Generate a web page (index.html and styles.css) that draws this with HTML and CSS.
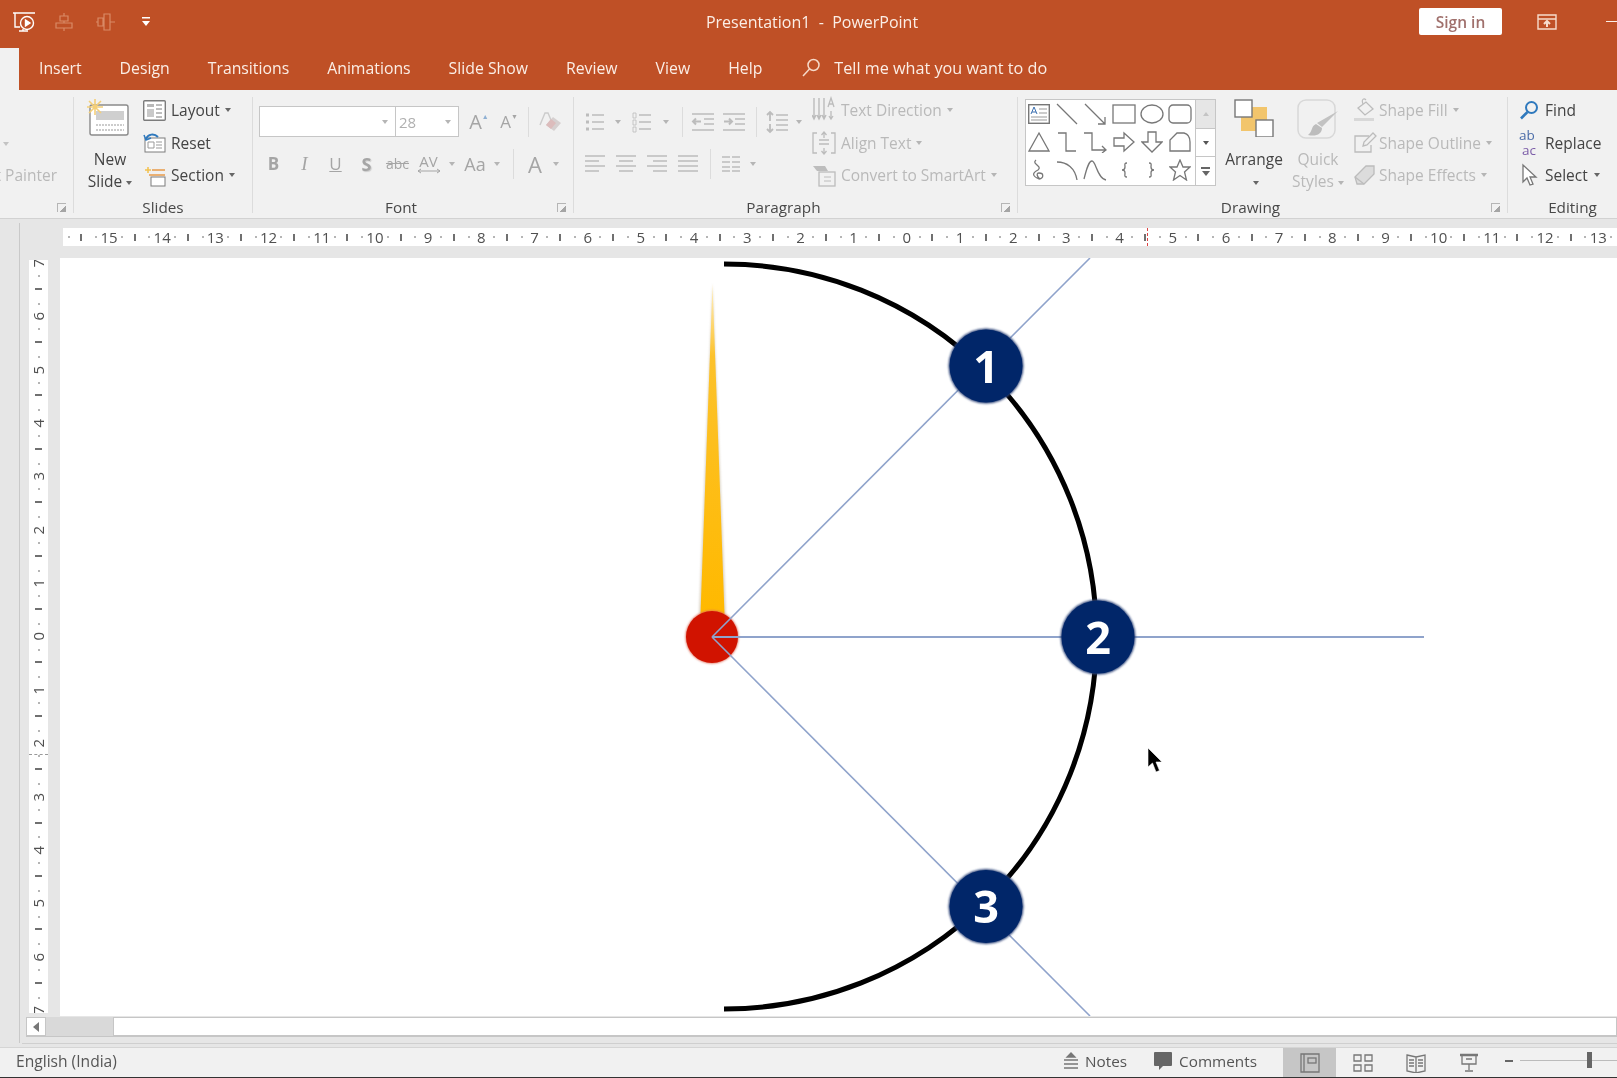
FILE: index.html
```html
<!DOCTYPE html>
<html>

<head>
    <meta charset="utf-8" />
    <title>Presentation1 - PowerPoint</title>
    <link rel="stylesheet" href="styles.css">
</head>

<body>
    <div class="app">
        <!-- title bar -->
        <header class="titlebar">
            <div class="qat">
                <svg class="qat-logo" width="24" height="24" viewBox="0 0 24 24" fill="none" stroke="#fff" stroke-width="1.4"><path d="M1 3h22M3 3v14h5"/><circle cx="15" cy="13" r="6.5"/><path d="M13.5 10v6l4.500-3z" fill="#fff"/><path d="M7 21h9M11 19v2"/></svg>
                <svg class="qat-dim" width="18" height="22" viewBox="0 0 18 22" fill="none" stroke="#d98a66" stroke-width="1.2"><path d="M9 2v3M9 10v2M9 17v3M5 5h8v5H5zM1 12h16v5H1z"/></svg>
                <svg class="qat-dim" width="20" height="22" viewBox="0 0 20 22" fill="none" stroke="#d98a66" stroke-width="1.2"><path d="M0 11h2M8 11h0M14 11h5M2 7h5v8H2zM8 3h6v16H8z"/></svg>
                <svg class="qat-more" width="10" height="12" viewBox="0 0 10 12" fill="#fff"><path d="M1 1h8v1.500H1zM1 5h8L5 10z"/></svg>
            </div>
            <div class="doc-title">Presentation1&nbsp; -&nbsp; PowerPoint</div>
            <div class="win-tools">
                <button class="signin">Sign in</button>
                <svg width="20" height="16" viewBox="0 0 20 16" fill="none" stroke="#f7dccc" stroke-width="1.4"><path d="M1 1h18v14H1zM1 5h18"/><path d="M10 13V7M7 10l3-3 3 3" stroke-width="2"/></svg>
                <span class="win-min"></span>
            </div>
        </header>

        <!-- tabs -->
        <nav class="tabs">
            <span class="tab-active"></span>
            <span class="tab">Insert</span>
            <span class="tab">Design</span>
            <span class="tab">Transitions</span>
            <span class="tab">Animations</span>
            <span class="tab">Slide Show</span>
            <span class="tab">Review</span>
            <span class="tab">View</span>
            <span class="tab">Help</span>
            <span class="tell">
                <svg width="20" height="22" viewBox="0 0 20 22" fill="none" stroke="#f6d9c8" stroke-width="1.5"><circle cx="12.500" cy="8" r="5.500"/><path d="M8.500 12 2 19"/></svg>
                Tell me what you want to do
            </span>
        </nav>

        <!-- ribbon -->
        <section class="ribbon">
            <div class="group group-stub">
                <div class="stub-body">
                    <span class="caret caret-stub"></span>
                    <span class="stub-text">Format Painter</span>
                </div>
                <div class="group-foot"><span class="group-label"></span><span class="launcher"></span></div>
            </div>
            <span class="rsep"></span>

            <div class="group group-slides">
                <div class="group-body">
                    <div class="bigbtn bigbtn-new">
                        <svg width="42" height="38" viewBox="0 0 42 38"><rect x="3" y="6" width="38" height="30" rx="2" fill="#fff" stroke="#8a8a8a" stroke-width="1.4"/><rect x="9" y="12" width="28" height="9" fill="#cfcfcf"/><path d="M9 26h28M9 31h28" stroke="#999" stroke-dasharray="2 1"/><g stroke="#f4cf78" stroke-width="1.6"><path d="M8 0v16M0 8h16M2 2l12 12M14 2 2 14"/></g></svg>
                        <div class="big-text">New<br>Slide<span class="caret"></span></div>
                    </div>
                    <div class="rows">
                        <div class="item"><svg width="23" height="21" viewBox="0 0 23 21" fill="none" stroke="#7c7c7c"><rect x=".7" y=".7" width="21.600" height="19.600" rx="1" stroke-width="1.400" fill="#fff"/><rect x="4" y="4" width="7" height="3" fill="#b8b8b8" stroke="none"/><rect x="4" y="9" width="7" height="8" fill="#c9c9c9" stroke="none"/><path d="M13 5h6M13 9h6M13 13h6M13 17h6"/></svg>Layout<span class="caret"></span></div>
                        <div class="item"><svg width="23" height="21" viewBox="0 0 23 21" fill="none" stroke="#7c7c7c"><rect x="2" y="6" width="20" height="14" fill="#fff"/><path d="M5 10h6v6H5zM13 10h6M13 13h6M13 16h6" stroke="#999"/><path d="M3 7c2-5 8-6 12-2" stroke="#2f79bd" stroke-width="2"/><path d="M1 3l2 5 5-2" stroke="#2f79bd" stroke-width="1.500"/></svg>Reset</div>
                        <div class="item"><svg width="23" height="23" viewBox="0 0 23 23" fill="none"><path d="M2 6h6M5 3v6" stroke="#f2c14e" stroke-width="1.500"/><path d="M9 6h13M6 11h16" stroke="#e79a4a" stroke-width="1.500"/><rect x="8" y="13" width="14" height="9" stroke="#7c7c7c" fill="#fff"/></svg>Section<span class="caret"></span></div>
                    </div>
                </div>
                <div class="group-foot"><span class="group-label">Slides</span></div>
            </div>
            <span class="rsep"></span>

            <div class="group group-font">
                <div class="tworow">
                    <div class="trow font-row1">
                        <span class="combo combo-name"><span class="caret caret-dim"></span></span>
                        <span class="combo combo-size">28<span class="caret caret-dim"></span></span>
                        <span class="slot glyph growa">A<sup>&#9650;</sup></span>
                        <span class="slot glyph shrinka">A<sup>&#9660;</sup></span>
                        <span class="vsep vsep-font"></span>
                        <span class="slot slot-eraser"><svg width="24" height="24" viewBox="0 0 24 24"><path d="M1 15 6 3h3l3 7" fill="none" stroke="#ccc" stroke-width="1.400"/><path d="M7 15l7-8 8 6-7 8z" fill="#d6d0d0"/><path d="M7 15l5-6 5 4-5 6z" fill="#dcbcbc"/></svg></span>
                    </div>
                    <div class="trow font-row2">
                        <span class="slot glyph fg-b">B</span>
                        <span class="slot glyph fg-i">I</span>
                        <span class="slot glyph fg-u">U</span>
                        <span class="slot glyph fg-s">S</span>
                        <span class="slot glyph fg-abc">abc</span>
                        <span class="slot glyph fg-av">AV<svg width="24" height="6" viewBox="0 0 24 6" fill="none" stroke="#a5a5a5"><path d="M1 3h22M4 1 1 3l3 2M20 1l3 2-3 2"/></svg></span>
                        <span class="caret-slot caret-14"><span class="caret caret-dim"></span></span>
                        <span class="slot glyph fg-aa">Aa</span>
                        <span class="caret-slot caret-12"><span class="caret caret-dim"></span></span>
                        <span class="vsep vsep-font2"></span>
                        <span class="slot glyph fg-a">A</span>
                        <span class="caret-slot caret-12"><span class="caret caret-dim"></span></span>
                    </div>
                </div>
                <div class="group-foot"><span class="group-label">Font</span><span class="launcher"></span></div>
            </div>
            <span class="rsep"></span>

            <div class="group group-para">
                <div class="group-body">
                    <div class="tworow para-left">
                        <div class="trow para-row1">
                            <span class="slot"><svg class="ico" width="22" height="22" viewBox="0 0 22 22"><path d="M8 4h12M8 11h12M8 18h12" stroke-width="1.500"/><path d="M2 4h3M2 11h3M2 18h3" stroke-width="3" stroke-dasharray="3 0"/></svg></span>
                            <span class="caret-slot w16"><span class="caret caret-dim"></span></span>
                            <span class="slot ml1"><svg class="ico" width="22" height="22" viewBox="0 0 22 22"><path d="M8 4h12M8 11h12M8 18h12" stroke-width="1.500"/><path d="M2 2h3v5H2zM2 9h3v5H2zM2 16h3v5H2z" stroke-width=".8"/></svg></span>
                            <span class="caret-slot w18"><span class="caret caret-dim"></span></span>
                            <span class="vsep vsep-p1"></span>
                            <span class="slot ml5"><svg class="ico" width="24" height="20" viewBox="0 0 24 20"><path d="M1 2h22M13 7h10M13 12h10M1 18h22" stroke-width="1.400"/><path d="M10 9.500H2M5 6.500 2 9.500l3 3" stroke-width="2"/></svg></span>
                            <span class="slot ml1"><svg class="ico" width="24" height="20" viewBox="0 0 24 20"><path d="M1 2h22M13 7h10M13 12h10M1 18h22" stroke-width="1.400"/><path d="M2 9.500h8M7 6.500l3 3-3 3" stroke-width="2"/></svg></span>
                            <span class="vsep vsep-p1"></span>
                            <span class="slot ml5"><svg class="ico" width="24" height="24" viewBox="0 0 24 24"><path d="M11 5h12M11 10h12M11 15h12M11 20h12" stroke-width="1.400"/><path d="M5 2v9M2 5l3-3 3 3M5 14v8M2 19l3 3 3-3" stroke-width="1.800"/></svg></span>
                            <span class="caret-slot w14"><span class="caret caret-dim"></span></span>
                        </div>
                        <div class="trow para-row2">
                            <span class="slot"><svg class="ico" width="22" height="20" viewBox="0 0 22 20"><path d="M1 2h20M1 7h14M1 12h20M1 17h14" stroke-width="1.500"/></svg></span>
                            <span class="slot ml1"><svg class="ico" width="22" height="20" viewBox="0 0 22 20"><path d="M1 2h20M4 7h14M1 12h20M4 17h14" stroke-width="1.500"/></svg></span>
                            <span class="slot ml1"><svg class="ico" width="22" height="20" viewBox="0 0 22 20"><path d="M1 2h20M7 7h14M1 12h20M7 17h14" stroke-width="1.500"/></svg></span>
                            <span class="slot ml1"><svg class="ico" width="22" height="20" viewBox="0 0 22 20"><path d="M1 2h20M1 7h20M1 12h20M1 17h20" stroke-width="1.500"/></svg></span>
                            <span class="vsep vsep-p1"></span>
                            <span class="slot ml5"><svg class="ico" width="20" height="18" viewBox="0 0 20 18"><path d="M1 2h8M11 2h8M1 7h8M11 7h8M1 12h8M11 12h8M1 16h8M11 16h8" stroke-width="1.400"/></svg></span>
                            <span class="caret-slot w14"><span class="caret caret-dim"></span></span>
                        </div>
                    </div>
                    <div class="rows rows-dim para-right">
                        <div class="item"><svg class="ico" width="24" height="28" viewBox="0 0 24 28"><path d="M2 2v20M7 2v20M12 2v20M0 19l2 4 2-4M5 19l2 4 2-4M10 19l2 4 2-4" stroke-width="1.400"/><path d="M16 11l3-9 3 9M17 8h4M19 15v8M17 20l2 3 2-3" stroke-width="1.300"/></svg>Text Direction<span class="caret caret-dim"></span></div>
                        <div class="item"><svg class="ico" width="24" height="24" viewBox="0 0 24 24"><path d="M5 2H1v20h4M19 2h4v20h-4M7 9h10M7 13h10" stroke-width="1.300"/><path d="M12 1v6M9.500 4 12 1l2.500 3M12 17v6M9.500 20l2.500 3 2.500-3" stroke-width="1.300"/></svg>Align Text<span class="caret caret-dim"></span></div>
                        <div class="item"><svg class="ico" width="24" height="24" viewBox="0 0 24 24"><path d="M1 3h12l3 5H5z" fill="#bdbdbd" stroke="none"/><rect x="7" y="9" width="16" height="14" fill="#f1f1f1" stroke-width="1.300"/><path d="M12 14h7M12 18h7"/></svg>Convert to SmartArt<span class="caret caret-dim"></span></div>
                    </div>
                </div>
                <div class="group-foot"><span class="group-label">Paragraph</span><span class="launcher"></span></div>
            </div>
            <span class="rsep"></span>

            <div class="group group-draw">
                <div class="group-body">
                    <div class="gallery">
                        <div class="shapes">
                            <span class="shape"><svg width="22" height="20" viewBox="0 0 22 20" fill="none" stroke="#777"><rect x=".7" y=".7" width="20.600" height="18.600" fill="#fff" stroke-width="1.400"/><path d="M3 10l3-7 3 7M4 8h4" stroke="#3a6fb0"/><path d="M11 5h8M11 9h8M3 13h16M3 16h16" stroke="#999"/></svg></span>
                            <span class="shape"><svg class="sh" width="22" height="22" viewBox="0 0 22 22"><path d="M1 1l20 20"/></svg></span>
                            <span class="shape"><svg class="sh" width="22" height="22" viewBox="0 0 22 22"><path d="M1 1l20 20M21 14v7h-7"/></svg></span>
                            <span class="shape"><svg class="sh" width="24" height="20" viewBox="0 0 24 20"><rect x="1" y="1" width="22" height="18"/></svg></span>
                            <span class="shape"><svg class="sh" width="24" height="20" viewBox="0 0 24 20"><ellipse cx="12" cy="10" rx="11" ry="9"/></svg></span>
                            <span class="shape"><svg class="sh" width="24" height="20" viewBox="0 0 24 20"><rect x="1" y="1" width="22" height="18" rx="4"/></svg></span>
                            <span class="shape"><svg class="sh" width="22" height="22" viewBox="0 0 22 22"><path d="M11 2 21 20H1z"/></svg></span>
                            <span class="shape"><svg class="sh" width="22" height="22" viewBox="0 0 22 22"><path d="M2 2h8v18h10"/></svg></span>
                            <span class="shape"><svg class="sh" width="24" height="22" viewBox="0 0 24 22"><path d="M1 2h8v17h13M19 15l4 4-4 3"/></svg></span>
                            <span class="shape"><svg class="sh" width="22" height="22" viewBox="0 0 22 22"><path d="M1 7h10V2l10 9-10 9v-5H1z"/></svg></span>
                            <span class="shape"><svg class="sh" width="22" height="22" viewBox="0 0 22 22"><path d="M7 1h8v10h6L11 21 1 11h6z"/></svg></span>
                            <span class="shape"><svg class="sh" width="22" height="22" viewBox="0 0 22 22"><path d="M8 2h7c4 1 6 4 6 9v9H1V9z"/></svg></span>
                            <span class="shape"><svg class="sh" width="20" height="22" viewBox="0 0 20 22"><path d="M7 1C2 5 14 7 9 11 3 14 3 17 10 20c5-1 5-6 0-6-3 0-2 4 1 6"/></svg></span>
                            <span class="shape"><svg class="sh" width="22" height="22" viewBox="0 0 22 22"><path d="M1 3c10 0 18 6 20 18"/></svg></span>
                            <span class="shape"><svg class="sh" width="24" height="22" viewBox="0 0 24 22"><path d="M1 20C4 8 6 2 9 2c4 0 5 17 14 19"/></svg></span>
                            <span class="shape"><svg class="sh" width="14" height="22" viewBox="0 0 14 22"><path d="M10 4C7 4 8 6 8 8c0 2-1 3-3 3 2 0 3 1 3 3 0 2-1 4 2 4"/></svg></span>
                            <span class="shape"><svg class="sh" width="14" height="22" viewBox="0 0 14 22"><path d="M4 4c3 0 2 2 2 4 0 2 1 3 3 3-2 0-3 1-3 3 0 2 1 4-2 4"/></svg></span>
                            <span class="shape"><svg class="sh" width="22" height="22" viewBox="0 0 22 22"><path d="M11 1l3 7h7l-5.500 5 2 8-6.500-4.500L4.500 21l2-8L1 8h7z"/></svg></span>
                        </div>
                        <div class="gal-scroll">
                            <span class="gal-btn gal-up"><span class="tri-up"></span></span>
                            <span class="gal-btn"><span class="tri-down"></span></span>
                            <span class="gal-btn"><span class="tri-more"></span></span>
                        </div>
                    </div>
                    <div class="bigbtn bigbtn-arrange">
                        <svg width="40" height="38" viewBox="0 0 40 38"><rect x="7" y="8" width="26" height="24" fill="#f2c56c"/><rect x="1" y="1" width="17" height="17" fill="#fff" stroke="#777" stroke-width="1.400"/><rect x="22" y="21" width="17" height="17" fill="#fff" stroke="#777" stroke-width="1.400"/></svg>
                        <div class="big-text">Arrange<br><span class="caret"></span></div>
                    </div>
                    <div class="bigbtn bigbtn-quick">
                        <svg width="42" height="42" viewBox="0 0 42 42" fill="none"><rect x="1" y="1" width="37" height="38" rx="8" stroke="#d8d8d8" stroke-width="1.500"/><path d="M41 12 25 28l-5-4z" fill="#c2c2c2"/><path d="M19 25c-5 2-3 7-8 11 8 2 14-1 14-7z" fill="#bdbdbd"/></svg>
                        <div class="big-text big-dim">Quick<br>Styles<span class="caret caret-dim"></span></div>
                    </div>
                    <div class="rows rows-dim draw-right">
                        <div class="item"><svg class="ico" width="24" height="24" viewBox="0 0 24 24"><path d="M5 10l8-6 7 7-8 6z" stroke-width="1.300"/><path d="M10 6c-2-5 1-6 3-4" stroke-width="1.200"/><path d="M1 20h20v3H1z" fill="#d8d8d8" stroke="none"/></svg>Shape Fill<span class="caret caret-dim"></span></div>
                        <div class="item"><svg class="ico" width="24" height="24" viewBox="0 0 24 24"><path d="M16 5H2v16h16v-7" stroke-width="1.300"/><path d="M20 2l3 3-9 9-4 1 1-4z" stroke-width="1.300"/></svg>Shape Outline<span class="caret caret-dim"></span></div>
                        <div class="item"><svg class="ico" width="24" height="24" viewBox="0 0 24 24"><path d="M2 14 13 3h8v8L11 21H4z" fill="#dcdcdc" stroke-width="1.300"/><path d="M2 14l9 7" stroke-width="1.300"/></svg>Shape Effects<span class="caret caret-dim"></span></div>
                    </div>
                </div>
                <div class="group-foot"><span class="group-label">Drawing</span><span class="launcher"></span></div>
            </div>
            <span class="rsep"></span>

            <div class="group group-edit">
                <div class="rows edit-rows">
                    <div class="item"><svg width="20" height="20" viewBox="0 0 20 20" fill="none" stroke="#2f79bd" stroke-width="2"><circle cx="12.500" cy="7.500" r="5.500"/><path d="M8.500 12 2 18.500" stroke-width="2.600"/></svg>Find</div>
                    <div class="item"><span class="replace-ico"><span>ab</span><span class="ac">ac</span></span>Replace</div>
                    <div class="item"><svg width="20" height="24" viewBox="0 0 20 24" fill="#fff" stroke="#777" stroke-width="1.300"><path d="M4 2v17l4-4 3 7 3-1-3-7h6z"/></svg>Select<span class="caret"></span></div>
                </div>
                <div class="group-foot"><span class="group-label">Editing</span></div>
            </div>
        </section>

        <!-- editor area -->
        <main class="workspace">
            <div class="gutter"></div>
            <div class="editor">
                <div class="hruler">
                    <span class="unit unit-lead"></span>
                    <span class="unit">15</span><span class="unit">14</span><span class="unit">13</span><span class="unit">12</span><span class="unit">11</span>
                    <span class="unit">10</span><span class="unit">9</span><span class="unit">8</span><span class="unit">7</span><span class="unit">6</span>
                    <span class="unit">5</span><span class="unit">4</span><span class="unit">3</span><span class="unit">2</span><span class="unit">1</span>
                    <span class="unit">0</span>
                    <span class="unit">1</span><span class="unit">2</span><span class="unit">3</span><span class="unit">4</span><span class="unit">5</span>
                    <span class="unit">6</span><span class="unit">7</span><span class="unit">8</span><span class="unit">9</span><span class="unit">10</span>
                    <span class="unit">11</span><span class="unit">12</span><span class="unit">13</span>
                    <span class="hmark"></span>
                </div>
                <div class="stage">
                    <div class="vruler">
                        <span class="vunit vunit-first"><span>7</span></span><span class="vunit"><span>6</span></span><span class="vunit"><span>5</span></span><span class="vunit"><span>4</span></span>
                        <span class="vunit"><span>3</span></span><span class="vunit"><span>2</span></span><span class="vunit"><span>1</span></span><span class="vunit"><span>0</span></span>
                        <span class="vunit"><span>1</span></span><span class="vunit"><span>2</span></span><span class="vunit"><span>3</span></span><span class="vunit"><span>4</span></span>
                        <span class="vunit"><span>5</span></span><span class="vunit"><span>6</span></span><span class="vunit"><span>7</span></span>
                        <span class="vmark"></span>
                    </div>
                    <div class="slide">
                        <!-- drawn in page coordinates -->
                        <svg class="slide-art" width="1557" height="759" viewBox="60 258 1557 759">
                            <defs>
                                <linearGradient id="needle" x1="0" y1="284" x2="0" y2="612" gradientUnits="userSpaceOnUse">
                                    <stop offset="0" stop-color="#fff0c4" />
                                    <stop offset="0.22" stop-color="#fcc22c" />
                                    <stop offset="1" stop-color="#ffb900" />
                                </linearGradient>
                                <filter id="soft" x="-20%" y="-20%" width="140%" height="140%">
                                    <feGaussianBlur stdDeviation="0.9" />
                                </filter>
                            </defs>
                            <path d="M724 264A372.500 372.500 0 0 1 724 1009" fill="none" stroke="#000" stroke-width="5" />
                            <polygon points="712.500,284 726,614 699,614" fill="#b9a98a" opacity=".5" filter="url(#soft)" />
                            <polygon points="712.500,284 724.500,614 700.500,614" fill="url(#needle)" />
                            <circle cx="712" cy="637" r="26.500" fill="#df6a56" filter="url(#soft)" />
                            <circle cx="712" cy="637" r="26" fill="#d11300" />
                            <g fill="none" stroke="#8fa3cb" stroke-width="1.600">
                                <path d="M712 637 1090 258" />
                                <path d="M712 637H1424" stroke-width="2" />
                                <path d="M712 637 1090 1016" />
                            </g>
                            <g>
                                <circle cx="986" cy="366" r="37.500" fill="#2f4478" filter="url(#soft)" />
                                <circle cx="986" cy="366" r="36.500" fill="#012669" />
                                <text class="badge-num" x="986" y="383">1</text>
                                <circle cx="1098" cy="637" r="37.500" fill="#2f4478" filter="url(#soft)" />
                                <circle cx="1098" cy="637" r="36.500" fill="#012669" />
                                <text class="badge-num" x="1098" y="654">2</text>
                                <circle cx="986" cy="906.500" r="37.500" fill="#2f4478" filter="url(#soft)" />
                                <circle cx="986" cy="906.500" r="36.500" fill="#012669" />
                                <text class="badge-num" x="986" y="923">3</text>
                            </g>
                            <path d="M1148 748V767L1152.500 763 1156 772 1159.500 770.500 1156 762H1162Z" fill="#000" stroke="#fff" stroke-width=".6" />
                        </svg>
                    </div>
                </div>
                <div class="hscroll">
                    <span class="hs-btn"><span class="tri-left"></span></span>
                    <span class="hs-track"></span>
                    <span class="hs-thumb"></span>
                </div>
                <div class="scroll-rule"></div>
            </div>
        </main>

        <!-- status bar -->
        <footer class="statusbar">
            <span class="lang">English (India)</span>
            <span class="st-item st-notes"><svg width="16" height="18" viewBox="0 0 16 18" fill="none" stroke="#777" stroke-width="1.300"><path d="M8 1 4 5h8z" fill="#777"/><path d="M1 8h14M1 12h14M1 16h14"/></svg>Notes</span>
            <span class="st-item st-comments"><svg width="20" height="20" viewBox="0 0 20 20" fill="#666"><path d="M2 1h16a1 1 0 0 1 1 1v12a1 1 0 0 1-1 1h-8l-4 4v-4H2a1 1 0 0 1-1-1V2a1 1 0 0 1 1-1z"/></svg>Comments</span>
            <span class="view view-on"><svg width="20" height="20" viewBox="0 0 20 20" fill="none" stroke="#777" stroke-width="1.300"><path d="M1 1h18v18H1zM4 1v18"/><rect x="8" y="5" width="8" height="5"/></svg></span>
            <span class="view"><svg width="20" height="20" viewBox="0 0 20 20" fill="none" stroke="#777" stroke-width="1.300"><path d="M1 2h7v6H1zM12 2h7v6h-7zM1 12h7v6H1zM12 12h7v6h-7z"/></svg></span>
            <span class="view"><svg width="20" height="20" viewBox="0 0 20 20" fill="none" stroke="#777" stroke-width="1.300"><path d="M1 2l9 2 9-2v16l-9 2-9-2zM10 4v16M3 7h5M3 10h5M3 13h5M12 7h5M12 10h5M12 13h5"/></svg></span>
            <span class="view"><svg width="20" height="20" viewBox="0 0 20 20" fill="none" stroke="#777" stroke-width="1.300"><path d="M1 2h18" stroke-width="2.500"/><path d="M3 3v8h14V3M7 6h6M10 11v6M6 18h8"/></svg></span>
            <span class="zoom-minus"></span>
            <span class="zoom-track"><span class="zoom-thumb"></span></span>
        </footer>
    </div>
</body>

</html>
```

FILE: styles.css
```css
* {
    padding: 0;
    margin: 0;
    box-sizing: border-box;
}

html,
body {
    width: 1617px;
    height: 1078px;
    overflow: hidden;
    background-color: #f1f1f1;
}

.app {
    display: flex;
    flex-direction: column;
    width: 1617px;
    height: 1078px;
    font-family: "Open Sans", "Noto Sans", sans-serif;
    font-size: 15px;
    color: #444;
    filter: blur(0.45px);
}

/* title bar */
.titlebar {
    display: flex;
    align-items: center;
    height: 47px;
    padding-bottom: 4px;
    background-color: #bf5026;
    color: #fbeee6;
}

.qat {
    display: flex;
    align-items: center;
    width: 160px;
    padding-left: 12px;
}

.qat-dim {
    margin-left: 19px;
}

.qat-dim+.qat-dim {
    margin-left: 23px;
}

.qat-more {
    margin-left: 25px;
}

.doc-title {
    width: 1259px;
    padding-left: 45px;
    text-align: center;
    font-size: 16px;
}

.win-tools {
    display: flex;
    align-items: center;
}

.signin {
    width: 83px;
    height: 27px;
    border: none;
    border-radius: 2px;
    background-color: #fff;
    color: #a0706c;
    font: 600 15.500px "Open Sans", sans-serif;
}

.win-tools svg {
    margin-left: 35px;
}

.win-min {
    width: 11px;
    height: 1px;
    margin-left: 49px;
    background-color: #fbeee6;
}

/* tabs */
.tabs {
    display: flex;
    align-items: center;
    gap: 38px;
    height: 43px;
    background-color: #bf5026;
    color: #fbeee6;
    font-size: 15.800px;
}

.tab,
.tell {
    margin-bottom: 2px;
}

.tab-active {
    align-self: stretch;
    width: 19px;
    margin-top: 1px;
    margin-right: -18px;
    background-color: #f1f1f1;
}

.tell {
    display: flex;
    align-items: center;
    gap: 13px;
    margin-left: 1px;
    font-size: 16.200px;
}

/* ribbon */
.ribbon {
    display: flex;
    height: 129px;
    background-color: #f1f1f1;
    border-bottom: 1px solid #d2d2d2;
}

.rsep {
    flex: none;
    width: 1px;
    margin: 7px 0 5px;
    background-color: #dcdcdc;
}

.group {
    display: flex;
    flex-direction: column;
    flex: none;
    padding-top: 7px;
    overflow: hidden;
}

.group-stub {
    width: 73px;
}

.group-slides {
    width: 178px;
}

.group-font {
    width: 320px;
}

.group-para {
    width: 443px;
}

.group-draw {
    width: 489px;
}

.group-edit {
    flex: 1;
}

.group-body {
    display: flex;
    flex: 1;
}

.group-foot {
    display: flex;
    align-items: center;
    height: 20px;
    margin-top: auto;
    margin-bottom: 1px;
}

.group-label {
    flex: 1;
    text-align: center;
    font-size: 15.300px;
    font-weight: 500;
    color: #484848;
}

.launcher {
    flex: none;
    width: 24px;
    height: 10px;
}

.launcher::after {
    content: "";
    display: block;
    width: 8px;
    height: 8px;
    margin: 1px 0 0 8px;
    border-top: 1px solid #b5b5b5;
    border-left: 1px solid #b5b5b5;
    background: linear-gradient(135deg, transparent 60%, #a5a5a5 60%);
}

.caret {
    display: inline-block;
    width: 0;
    height: 0;
    margin-left: 4px;
    vertical-align: middle;
    border-top: 4px solid #666;
    border-left: 3.500px solid transparent;
    border-right: 3.500px solid transparent;
}

.caret-dim {
    border-top-color: #b5b5b5;
}

.rows {
    display: grid;
    grid-auto-rows: 26px;
    row-gap: 6.500px;
}

.item {
    display: flex;
    align-items: center;
    gap: 5px;
    white-space: nowrap;
    font-size: 15.500px;
}

.item .caret {
    margin-left: 0;
}

.rows-dim .item {
    color: #b9b9b9;
}

.ico {
    fill: none;
    stroke: #bcbcbc;
}

.bigbtn {
    display: flex;
    flex-direction: column;
    align-items: center;
    padding-top: 2px;
    font-size: 15.500px;
    line-height: 22px;
    text-align: center;
}

.big-text {
    margin-top: 11px;
}

.big-dim {
    color: #b9b9b9;
}

/* clipboard stub */
.stub-body {
    display: flex;
    flex-direction: column;
    flex: 1;
    padding-top: 45px;
}

.caret-stub {
    margin-left: 3px;
    border-top-color: #c3c3c3;
}

.stub-text {
    display: flex;
    justify-content: flex-end;
    margin-top: 18px;
    padding-right: 16px;
    white-space: nowrap;
    color: #b9b9b9;
    font-size: 15.500px;
}

/* slides group */
.bigbtn-new {
    width: 54px;
    margin-left: 9px;
}

.bigbtn-new svg {
    margin-left: -5px;
}

.group-slides .rows {
    margin-left: 6px;
}

/* font and paragraph rows */
.tworow {
    display: flex;
    flex-direction: column;
    row-gap: 11px;
    padding-top: 9px;
}

.trow {
    display: flex;
    align-items: center;
    height: 31px;
}

.font-row1 {
    padding-left: 6px;
}

.font-row2 {
    padding-left: 5px;
}

.combo {
    display: flex;
    align-items: center;
    justify-content: flex-end;
    height: 31px;
    padding-right: 7px;
    border: 1px solid #c6c6c6;
    background-color: #fff;
    color: #b0b0b0;
}

.combo-name {
    width: 137px;
}

.combo-size {
    justify-content: space-between;
    width: 64px;
    margin-left: -1px;
    padding-left: 3px;
}

.slot {
    display: flex;
    flex: none;
    align-items: center;
    justify-content: center;
    width: 30px;
}

.font-row2 .slot {
    width: 31px;
}

.glyph {
    color: #a5a5a5;
    font-size: 16px;
}

.growa {
    margin-left: 5px;
    font-size: 20px;
}

.shrinka {
    font-size: 17px;
}

.growa sup,
.shrinka sup {
    margin-top: -10px;
    font-size: 7px;
    color: #8fb0d3;
}

.shrinka sup {
    color: #a5a5a5;
}

.vsep {
    flex: none;
    width: 1px;
    height: 30px;
    background-color: #dcdcdc;
}

.vsep-font {
    margin-left: 4px;
}

.slot-eraser {
    margin-left: 7px;
}

.fg-b {
    font-weight: 700;
    font-size: 17px;
}

.fg-i {
    font-family: "Liberation Serif", serif;
    font-style: italic;
    font-size: 19px;
}

.fg-u {
    text-decoration: underline;
    font-size: 17px;
}

.fg-s {
    font-weight: 700;
    text-shadow: 1px 1px 1px #ccc;
    font-size: 18px;
}

.fg-abc {
    font-size: 14px;
    text-decoration: line-through;
}

.fg-av {
    flex-direction: column;
    font-size: 15px;
    line-height: 14px;
}

.font-row2 .fg-aa {
    width: 32px;
    margin-left: 0;
    font-size: 18px;
}

.font-row2 .fg-a {
    width: 30px;
    margin-left: 6px;
    font-size: 22px;
}

.caret-slot {
    display: flex;
    flex: none;
    justify-content: center;
}

.caret-slot .caret {
    margin: 0;
}

.caret-14 {
    width: 15px;
}

.caret-12 {
    width: 11px;
}

.vsep-font2 {
    margin-left: 11px;
}

.w14 {
    width: 14px;
}

.w16 {
    width: 16px;
}

.w18 {
    width: 18px;
}

.ml1 {
    margin-left: 1px;
}

.ml5 {
    margin-left: 5px;
}

.vsep-p1 {
    margin-left: 7px;
}

.para-left {
    width: 238px;
    padding-left: 6px;
}

/* drawing group */
.gallery {
    display: flex;
    width: 191px;
    height: 87px;
    margin: 2px 0 0 7px;
    border: 1px solid #c6c6c6;
    background-color: #fff;
}

.shapes {
    display: grid;
    grid-template-columns: repeat(6, 28.200px);
    grid-auto-rows: 28px;
    width: 170px;
    margin-left: -1px;
}

.shape {
    display: flex;
    align-items: center;
    justify-content: center;
}

.sh {
    fill: none;
    stroke: #777;
    stroke-width: 1.300;
}

.gal-scroll {
    display: flex;
    flex-direction: column;
    flex: 1;
    border-left: 1px solid #c6c6c6;
}

.gal-btn {
    display: flex;
    flex: 1;
    align-items: center;
    justify-content: center;
    border-bottom: 1px solid #c6c6c6;
}

.gal-btn:last-child {
    border-bottom: none;
}

.gal-up {
    background-color: #e6e6e6;
}

.tri-up {
    border-bottom: 4px solid #c4c4c4;
    border-left: 3.500px solid transparent;
    border-right: 3.500px solid transparent;
}

.tri-down {
    border-top: 4px solid #555;
    border-left: 3.500px solid transparent;
    border-right: 3.500px solid transparent;
}

.tri-more {
    position: relative;
    margin-top: 5px;
    border-top: 5px solid #666;
    border-left: 4.500px solid transparent;
    border-right: 4.500px solid transparent;
}

.tri-more::before {
    content: "";
    position: absolute;
    top: -9px;
    left: -4.500px;
    width: 9px;
    height: 2px;
    background-color: #666;
}

.bigbtn-arrange {
    flex: none;
    width: 76px;
    padding-top: 2px;
}

.bigbtn-quick {
    flex: none;
    width: 52px;
}

.bigbtn-quick .big-text {
    margin-top: 7px;
}

.draw-right {
    margin-left: 9px;
}

.draw-right .item {
    gap: 2px;
}

.draw-right .item .caret {
    margin-left: 3px;
}

/* editing group */
.edit-rows {
    padding-left: 11px;
}

.edit-rows .item {
    gap: 6px;
}

.replace-ico {
    display: flex;
    flex-direction: column;
    width: 20px;
    font-size: 13.500px;
    line-height: 15px;
    color: #4a6ca8;
}

.replace-ico .ac {
    color: #7c5da8;
    padding-left: 3px;
}

.group-edit .group-foot {
    padding-left: 20px;
}

/* workspace */
.workspace {
    display: flex;
    flex: none;
    height: 828px;
    background-color: #e6e6e6;
}

.gutter {
    flex: none;
    width: 20px;
    margin-top: 4px;
    margin-bottom: 4px;
    border-right: 1px solid #c9c9c9;
}

.editor {
    display: flex;
    flex-direction: column;
    flex: 1;
    min-width: 0;
    padding-top: 9px;
}

.hruler {
    position: relative;
    display: flex;
    flex: none;
    height: 18px;
    margin-left: 43px;
    overflow: hidden;
    background-color: #fff;
}

.unit {
    flex: none;
    width: 53.200px;
    line-height: 18px;
    text-align: center;
    font-size: 15px;
    color: #505050;
    background:
        linear-gradient(#707070, #707070) 100% 50% / 2px 7px no-repeat,
        linear-gradient(#b5b5b5, #b5b5b5) 25% 50% / 2px 2px no-repeat,
        linear-gradient(#b5b5b5, #b5b5b5) 75% 50% / 2px 2px no-repeat;
}

.unit-lead {
    margin-left: -33.800px;
}

.hmark {
    position: absolute;
    top: 0;
    left: 1084px;
    height: 18px;
    border-left: 1px dashed #d44;
}

.stage {
    display: flex;
    flex: none;
    height: 759px;
    margin-top: 12px;
}

.vruler {
    position: relative;
    display: flex;
    flex-direction: column;
    flex: none;
    width: 19px;
    height: 753px;
    margin: 2px 0 0 9px;
    overflow: hidden;
    background-color: #fff;
}

.vunit {
    display: flex;
    flex: none;
    align-items: center;
    justify-content: center;
    height: 53.400px;
    font-size: 15px;
    color: #505050;
    background:
        linear-gradient(#707070, #707070) 50% 100% / 7px 2px no-repeat,
        linear-gradient(#b5b5b5, #b5b5b5) 50% 25% / 2px 2px no-repeat,
        linear-gradient(#b5b5b5, #b5b5b5) 50% 75% / 2px 2px no-repeat;
}

.vunit span {
    writing-mode: vertical-rl;
    transform: rotate(180deg);
    line-height: 18px;
    margin-right: 2px;
}

.vunit-first {
    margin-top: -23.700px;
}

.vmark {
    position: absolute;
    top: 494px;
    left: 0;
    width: 19px;
    border-top: 1px dashed #999;
}

.slide {
    flex: none;
    width: 1557px;
    height: 758px;
    margin-left: 12px;
    overflow: hidden;
    background-color: #fff;
}

.slide-art {
    display: block;
}

.badge-num {
    fill: #fff;
    font-family: "Open Sans", sans-serif;
    font-size: 45px;
    font-weight: 700;
    text-anchor: middle;
}

.hscroll {
    display: flex;
    flex: none;
    height: 20px;
    margin-left: 6px;
    border-bottom: 1px solid #c6c6c6;
}

.hs-btn {
    display: flex;
    flex: none;
    align-items: center;
    justify-content: center;
    width: 20px;
    border: 1px solid #c6c6c6;
    background-color: #fff;
}

.tri-left {
    border-right: 6px solid #777;
    border-top: 5px solid transparent;
    border-bottom: 5px solid transparent;
}

.hs-track {
    flex: none;
    width: 67px;
    background-color: #d9d9d9;
}

.hs-thumb {
    flex: 1;
    border: 1px solid #c6c6c6;
    background-color: #fff;
}

.scroll-rule {
    flex: none;
    height: 1px;
    margin: 6px 0 0 2px;
    background-color: #cfcfcf;
}

/* status bar */
.statusbar {
    display: flex;
    flex: none;
    align-items: center;
    height: 31px;
    padding-bottom: 4px;
    border-top: 1px solid #d5d5d5;
    border-bottom: 1px solid #333;
    background-color: #f1f1f1;
    font-size: 15.300px;
    color: #555;
}

.lang {
    width: 1063px;
    padding-left: 16px;
    font-size: 15.600px;
}

.st-item {
    display: flex;
    align-items: center;
    gap: 6px;
    font-weight: 500;
}

.st-comments {
    width: 130px;
    margin-left: 26px;
}

.view {
    display: flex;
    align-self: stretch;
    align-items: center;
    justify-content: center;
    width: 53px;
    margin-bottom: -4px;
}

.view-on {
    background-color: #c6c6c6;
}

.zoom-minus {
    width: 8px;
    height: 2px;
    margin-left: 10px;
    background-color: #666;
}

.zoom-track {
    position: relative;
    flex: 1;
    height: 1px;
    margin-left: 7px;
    background-color: #bbb;
}

.zoom-thumb {
    position: absolute;
    top: -8px;
    left: 67px;
    width: 5px;
    height: 16px;
    background-color: #666;
}
```
